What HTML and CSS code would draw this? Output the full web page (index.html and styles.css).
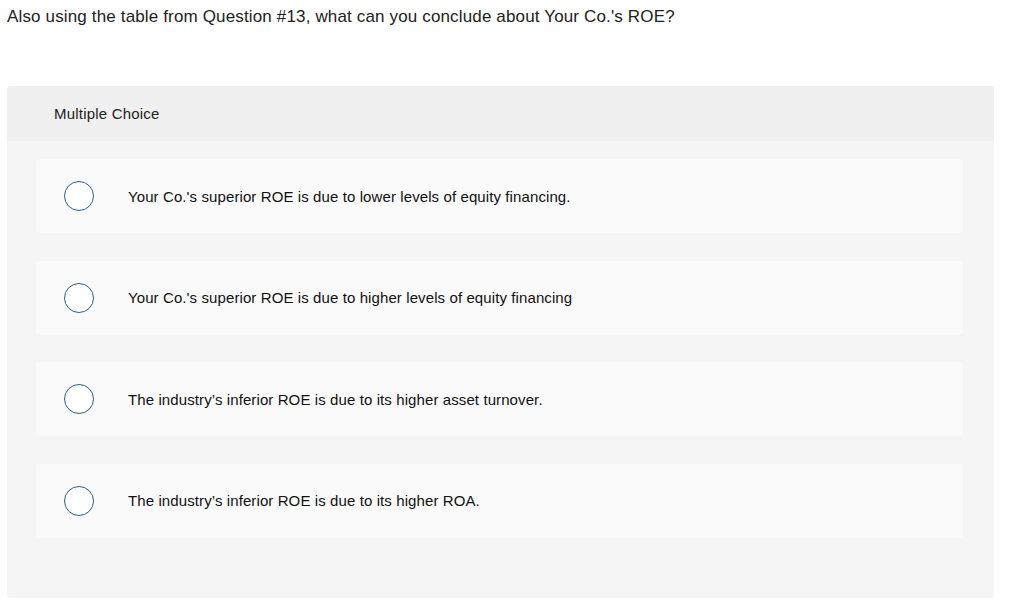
FILE: index.html
```html
<!DOCTYPE html>
<html>
<head>
<meta charset="utf-8">
<link rel="stylesheet" href="styles.css">
</head>
<body>
<p class="question">Also using the table from Question #13, what can you conclude about Your Co.'s ROE?</p>
<div class="panel">
  <div class="panel-head">Multiple Choice</div>
  <div class="panel-body">
    <div class="option"><span class="radio"></span><span class="label">Your Co.'s superior ROE is due to lower levels of equity financing.</span></div>
    <div class="option"><span class="radio"></span><span class="label">Your Co.'s superior ROE is due to higher levels of equity financing</span></div>
    <div class="option"><span class="radio"></span><span class="label">The industry’s inferior ROE is due to its higher asset turnover.</span></div>
    <div class="option"><span class="radio"></span><span class="label">The industry’s inferior ROE is due to its higher ROA.</span></div>
  </div>
</div>
</body>
</html>
```

FILE: styles.css
```css
html, body {
  margin: 0;
  padding: 0;
  background: #ffffff;
}
body {
  font-family: "Liberation Sans", Arial, sans-serif;
  color: #1a1a1a;
  padding: 0 30px 0 7px;
}
.question {
  margin: 0;
  padding-top: 6px;
  font-size: 17px;
  line-height: 22px;
  letter-spacing: 0.15px;
  color: #222;
}
.panel {
  margin-top: 58px;
  background: #f5f5f5;
  border-radius: 4px;
  height: 512px;
}
.panel-head {
  background: #f0f0f0;
  height: 55px;
  box-sizing: border-box;
  padding-left: 47px;
  display: flex;
  align-items: center;
  font-size: 15px;
  letter-spacing: 0.2px;
  color: #222;
  border-radius: 4px 4px 0 0;
}
.panel-body {
  padding: 18px 31px 0 29px;
  display: flex;
  flex-direction: column;
  gap: 27.5px;
}
.option {
  background: #fafafa;
  border-radius: 4px;
  height: 74px;
  display: flex;
  align-items: center;
  padding-left: 28px;
}
.radio {
  width: 28px;
  height: 28px;
  border: 1.5px solid #2d5c8e;
  border-radius: 50%;
  flex: none;
  background: #fff;
}
.label {
  margin-left: 34px;
  font-size: 15px;
  letter-spacing: 0.1px;
  color: #111;
}
```
